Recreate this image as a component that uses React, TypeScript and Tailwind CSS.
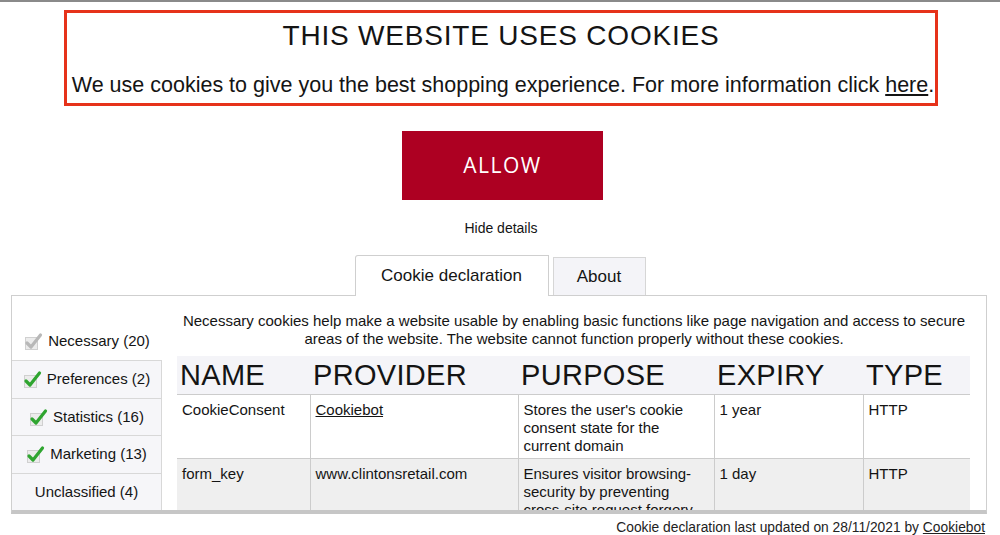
import React from 'react';

const categories = [
  { label: 'Necessary (20)', color: '#b8b8b8', active: true },
  { label: 'Preferences (2)', color: '#2fa530', active: false },
  { label: 'Statistics (16)', color: '#2fa530', active: false },
  { label: 'Marketing (13)', color: '#2fa530', active: false },
];

const rows = [
  {
    name: 'CookieConsent',
    provider: 'Cookiebot',
    link: true,
    purpose: "Stores the user's cookie consent state for the current domain",
    expiry: '1 year',
    type: 'HTTP',
  },
  {
    name: 'form_key',
    provider: 'www.clintonsretail.com',
    link: false,
    purpose: 'Ensures visitor browsing-security by preventing cross-site request forgery. This cookie is essential for the security of the website and visitor.',
    expiry: '1 day',
    type: 'HTTP',
  },
];

function Check({ color }: { color: string }) {
  return (
    <svg width="19" height="19" viewBox="0 0 19 19" className="shrink-0">
      <rect x="1.5" y="5.5" width="12" height="12" fill="#ececec" stroke="#d0d0d0" />
      <path d="M3 11 L7 15 L16.5 3" fill="none" stroke={color} strokeWidth="3.2" strokeLinecap="round" strokeLinejoin="round" />
    </svg>
  );
}

export default function App() {
  return (
    <div className="w-[1000px] h-[535px] overflow-hidden bg-white text-[#141414] border-t-2 border-[#8a8a8a]" style={{ fontFamily: '"Liberation Sans", Arial, sans-serif' }}>
      {/* Banner */}
      <div className="ml-[64px] mt-[8px] w-[874px] h-[96px] border-[3px] border-[#e6321a] flex flex-col items-center">
        <h1 className="text-[28px] leading-[32px] mt-[7px] tracking-[0.8px]">THIS WEBSITE USES COOKIES</h1>
        <p className="text-[21.5px] leading-[26px] mt-[20px] ml-[4px]">
          We use cookies to give you the best shopping experience. For more information click <span className="underline">here</span>.
        </p>
      </div>

      {/* Allow */}
      <div className="flex justify-center mt-[25px]">
        <button className="w-[201px] h-[69px] bg-[#ad0022] text-white text-[21px] tracking-[1.5px] ml-[5px]" style={{ fontFamily: '"Open Sans", sans-serif' }}>
          ALLOW
        </button>
      </div>

      <div className="text-center text-[14px] leading-[18px] mt-[19px] ml-[2px]">Hide details</div>

      {/* Tabs */}
      <div className="flex justify-center items-end gap-[4px] mt-[18px] h-[40px] relative z-10">
        <div className="w-[194px] h-[41px] bg-white border border-b-0 border-[#cfcfcf] rounded-tl-[3px] flex items-center justify-center text-[17px] -mb-[1px]">
          Cookie declaration
        </div>
        <div className="w-[93px] h-[38px] bg-[#f4f4f8] border border-b-0 border-[#d6d6d6] flex items-center justify-center text-[17px]">
          About
        </div>
      </div>

      {/* Panel */}
      <div className="ml-[11px] w-[976px] h-[219px] border border-[#cfcfcf] border-b-[4px] border-b-[#c6c6c6] flex overflow-hidden">
        <div className="w-[150px] shrink-0 pt-[27px] flex flex-col text-[15px]">
          {categories.map((c) => (
            <div
              key={c.label}
              className={
                c.active
                  ? 'h-[38px] flex items-center justify-center gap-[5px] bg-white'
                  : 'h-[38px] flex items-center justify-center gap-[5px] bg-[#f6f6f9] border-t border-r border-[#d8d8d8]'
              }
            >
              <Check color={c.color} />
              <span>{c.label}</span>
            </div>
          ))}
          <div className="h-[38px] flex items-center justify-center bg-[#f6f6f9] border-t border-r border-[#d8d8d8]">
            Unclassified (4)
          </div>
        </div>

        <div className="flex-1 pl-[15px] pr-[15px] pt-[16px] overflow-hidden">
          <p className="text-[15px] leading-[18px] text-center -ml-[7px] -mr-[7px]">
            Necessary cookies help make a website usable by enabling basic functions like page navigation and access to secure areas of the website. The website cannot function properly without these cookies.
          </p>
          <table className="mt-[8px] w-[793px] border-collapse table-fixed">
            <colgroup>
              <col className="w-[133px]" />
              <col className="w-[208px]" />
              <col className="w-[196px]" />
              <col className="w-[149px]" />
              <col className="w-[107px]" />
            </colgroup>
            <thead>
              <tr className="bg-[#f4f4f8] h-[38px]">
                {['NAME', 'PROVIDER', 'PURPOSE', 'EXPIRY', 'TYPE'].map((h) => (
                  <th key={h} className="text-left font-normal text-[29px] leading-[38px] pl-[3px] tracking-[0.3px]">
                    {h}
                  </th>
                ))}
              </tr>
            </thead>
            <tbody className="text-[15px] leading-[18px]">
              {rows.map((r, i) => (
                <tr key={r.name} className={i % 2 === 1 ? 'bg-[#efefef]' : 'bg-white'}>
                  <td className="align-top border-t border-[#cccccc] pl-[5px] pt-[6px] pb-[10px] h-[64px]">{r.name}</td>
                  <td className="align-top border border-b-0 border-[#cccccc] pl-[5px] pt-[6px]">
                    {r.link ? <span className="underline">{r.provider}</span> : r.provider}
                  </td>
                  <td className="align-top border border-b-0 border-[#cccccc] pl-[5px] pr-[4px] pt-[6px]">{r.purpose}</td>
                  <td className="align-top border border-b-0 border-[#cccccc] pl-[5px] pt-[6px]">{r.expiry}</td>
                  <td className="align-top border-t border-[#cccccc] pl-[5px] pt-[6px]">{r.type}</td>
                </tr>
              ))}
            </tbody>
          </table>
        </div>
      </div>

      <div className="text-right text-[13.8px] leading-[16px] mt-[6px] pr-[15px] text-[#222]">
        Cookie declaration last updated on 28/11/2021 by <span className="underline">Cookiebot</span>
      </div>
    </div>
  );
}
